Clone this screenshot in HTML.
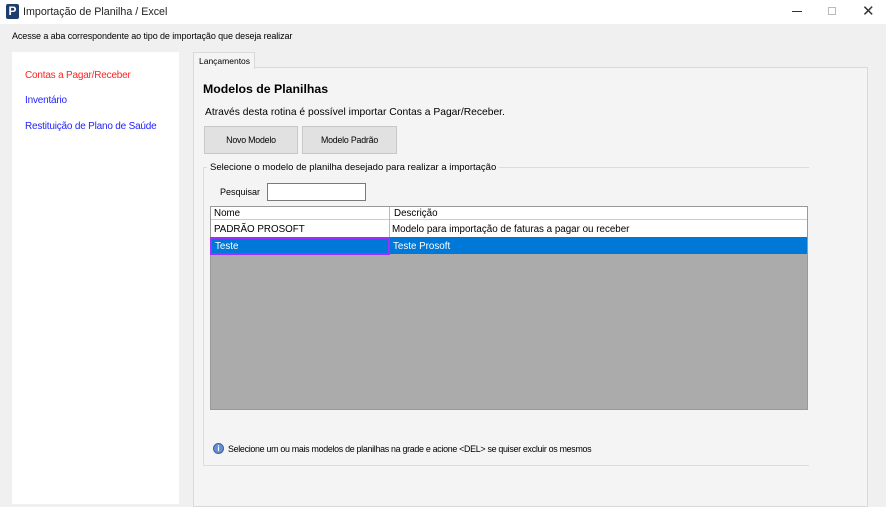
<!DOCTYPE html>
<html><head><meta charset="utf-8"><style>
*{margin:0;padding:0;box-sizing:border-box}
body{width:886px;height:504px;background:#f0f0f0;font-family:"Liberation Sans",sans-serif;position:relative;overflow:hidden;color:#000}
.a{position:absolute;white-space:nowrap}
.sm{font-size:10px;letter-spacing:-0.2px}
.t{font-size:9.8px}
</style></head><body>
<div class="a" style="left:0;top:0;width:886px;height:24px;background:#fff"></div>
<div class="a" style="left:6px;top:4px;width:13px;height:15px;background:#1e3f6e;border-radius:2px;color:#fff;font-weight:bold;font-size:12px;line-height:15px;text-align:center">P</div>
<div class="a" style="left:23px;top:6px;font-size:10.7px;color:#222">Importação de Planilha / Excel</div>
<div class="a" style="left:792px;top:11px;width:10px;height:1px;background:#333"></div>
<div class="a" style="left:828px;top:7px;width:8px;height:8px;border:1px solid #bbb"></div>
<div class="a" style="left:862px;top:2px;font-size:15px;color:#333">✕</div>
<div class="a" style="left:12px;top:31px;font-size:9px;letter-spacing:-0.1px">Acesse a aba correspondente ao tipo de importação que deseja realizar</div>
<div class="a" style="left:12px;top:52px;width:167px;height:452px;background:#fff"></div>
<div class="a sm" style="left:25px;top:70px;color:#f22">Contas a Pagar/Receber</div>
<div class="a sm" style="left:25px;top:95px;color:#22f">Inventário</div>
<div class="a sm" style="left:25px;top:121px;color:#22f">Restituição de Plano de Saúde</div>
<div class="a" style="left:193px;top:67px;width:675px;height:440px;background:#f4f4f4;border:1px solid #d9d9d9"></div>
<div class="a" style="left:193px;top:52px;width:62px;height:17px;background:#f4f4f4;border:1px solid #d9d9d9;border-bottom:none;font-size:8.5px;padding:3px 0 0 5px">Lançamentos</div>
<div class="a" style="left:203px;top:82px;font-size:12.3px;font-weight:bold">Modelos de Planilhas</div>
<div class="a" style="left:205px;top:107px;font-size:10.3px">Através desta rotina é possível importar Contas a Pagar/Receber.</div>
<div class="a" style="left:204px;top:126px;width:94px;height:28px;background:#e1e1e1;border:1px solid #c8c8c8;font-size:8.8px;text-align:center;line-height:26px;letter-spacing:-0.2px">Novo Modelo</div>
<div class="a" style="left:302px;top:126px;width:95px;height:28px;background:#e1e1e1;border:1px solid #c8c8c8;font-size:8.8px;text-align:center;line-height:26px;letter-spacing:-0.2px">Modelo Padrão</div>
<div class="a" style="left:203px;top:167px;width:606px;height:299px;border:1px solid #dcdcdc;border-right:none"></div>
<div class="a" style="left:207px;top:162px;background:#f4f4f4;padding:0 3px 0 3px;font-size:9.5px">Selecione o modelo de planilha desejado para realizar a importação</div>
<div class="a" style="left:220px;top:187px;font-size:9px">Pesquisar</div>
<div class="a" style="left:267px;top:183px;width:99px;height:18px;background:#fff;border:1px solid #7a7a7a"></div>
<div class="a" style="left:210px;top:206px;width:598px;height:204px;background:#ababab;border:1px solid #999"></div>
<div class="a" style="left:211px;top:207px;width:596px;height:13px;background:#fff;border-bottom:1px solid #ccc"></div>
<div class="a" style="left:211px;top:220px;width:596px;height:17px;background:#fff"></div>
<div class="a" style="left:211px;top:237px;width:596px;height:17px;background:#0078d7"></div>
<div class="a" style="left:389px;top:207px;width:1px;height:47px;background:#bbb"></div>
<div class="a" style="left:210px;top:237px;width:180px;height:18px;border:2px solid #9b30ff"></div>
<div class="a t" style="left:214px;top:208px">Nome</div>
<div class="a t" style="left:394px;top:208px">Descrição</div>
<div class="a t" style="left:214px;top:224px">PADRÃO PROSOFT</div>
<div class="a t" style="left:392px;top:224px">Modelo para importação de faturas a pagar ou receber</div>
<div class="a t" style="left:215px;top:241px;color:#fff">Teste</div>
<div class="a t" style="left:393px;top:241px;color:#fff">Teste Prosoft</div>
<div class="a" style="left:213px;top:443px;width:11px;height:11px;border-radius:50%;background:#6a8fd0;border:1px solid #3c5fa8;color:#fff;font-size:8px;line-height:9px;text-align:center;font-weight:bold">i</div>
<div class="a" style="left:228px;top:444px;font-size:8.9px;letter-spacing:-0.3px">Selecione um ou mais modelos de planilhas na grade e acione &lt;DEL&gt; se quiser excluir os mesmos</div>
</body></html>
